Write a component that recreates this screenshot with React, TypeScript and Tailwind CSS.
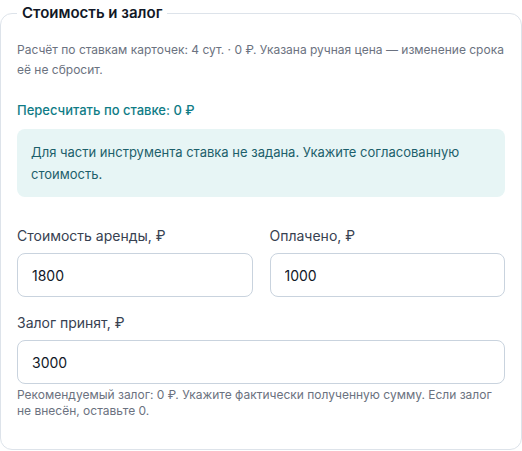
export default function App() {
  return (
    <div className="w-[522px] h-[451px] bg-white font-['Inter',sans-serif]">
      <fieldset className="w-[522px] h-[448px] mt-[2px] border border-[#dde3ea] rounded-xl pl-[16px] pr-[16px]">
        <legend className="px-[5px] text-[15px] leading-[22px] font-semibold text-[#111827]">
          Стоимость и залог
        </legend>

        <p className="mt-[16px] text-[12px] leading-[20px] text-[#6b7280]">
          Расчёт по ставкам карточек: 4 сут. · 0 ₽. Указана ручная цена — изменение срока её не сбросит.
        </p>

        <button className="mt-[20px] block text-[13px] leading-[20px] text-[#0f7c86] font-medium">
          Пересчитать по ставке: 0 ₽
        </button>

        <div className="mt-[9px] rounded-lg bg-[#e7f5f5] px-[14px] py-[12px] text-[13px] leading-[22px] text-[#1c5f6b]">
          Для части инструмента ставка не задана. Укажите согласованную стоимость.
        </div>

        <div className="mt-[29px] grid grid-cols-2 gap-x-[17px]">
          <label className="block">
            <span className="block text-[14px] leading-[20px] text-[#374151]">
              Стоимость аренды, ₽
            </span>
            <input
              defaultValue="1800"
              className="mt-[7px] w-full h-[44px] rounded-lg border border-[#c9d3de] px-[14px] text-[14px] text-[#111827] outline-none"
            />
          </label>
          <label className="block">
            <span className="block text-[14px] leading-[20px] text-[#374151]">
              Оплачено, ₽
            </span>
            <input
              defaultValue="1000"
              className="mt-[7px] w-full h-[44px] rounded-lg border border-[#c9d3de] px-[14px] text-[14px] text-[#111827] outline-none"
            />
          </label>
        </div>

        <label className="mt-[16px] block">
          <span className="block text-[14px] leading-[20px] text-[#374151]">
            Залог принят, ₽
          </span>
          <input
            defaultValue="3000"
            className="mt-[7px] w-full h-[44px] rounded-lg border border-[#c9d3de] px-[14px] text-[14px] text-[#111827] outline-none"
          />
        </label>
        <p className="mt-[3px] text-[12px] leading-[16px] text-[#6b7280]">
          Рекомендуемый залог: 0 ₽. Укажите фактически полученную сумму. Если залог
          <br />
          не внесён, оставьте 0.
        </p>
      </fieldset>
    </div>
  );
}
